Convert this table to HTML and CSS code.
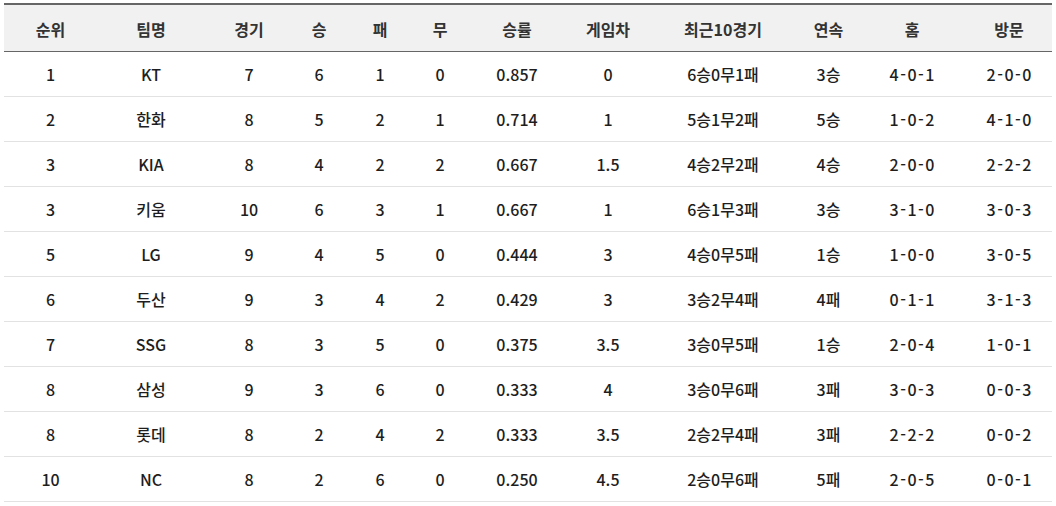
FILE: index.html
```html
<!DOCTYPE html>
<html lang="ko">
<head>
<meta charset="utf-8">
<title>순위</title>
<link rel="stylesheet" href="styles.css">
</head>
<body>
<div class="wrap">
<table class="rank">
<colgroup>
<col class="c1"><col class="c2"><col class="c3"><col class="c4"><col class="c5"><col class="c6">
<col class="c7"><col class="c8"><col class="c9"><col class="c10"><col class="c11"><col class="c12">
</colgroup>
<thead>
<tr><th>순위</th><th>팀명</th><th>경기</th><th>승</th><th>패</th><th>무</th><th>승률</th><th>게임차</th><th>최근10경기</th><th>연속</th><th>홈</th><th>방문</th></tr>
</thead>
<tbody>
<tr><td>1</td><td>KT</td><td>7</td><td>6</td><td>1</td><td>0</td><td>0.857</td><td>0</td><td>6승0무1패</td><td>3승</td><td>4-0-1</td><td>2-0-0</td></tr>
<tr><td>2</td><td>한화</td><td>8</td><td>5</td><td>2</td><td>1</td><td>0.714</td><td>1</td><td>5승1무2패</td><td>5승</td><td>1-0-2</td><td>4-1-0</td></tr>
<tr><td>3</td><td>KIA</td><td>8</td><td>4</td><td>2</td><td>2</td><td>0.667</td><td>1.5</td><td>4승2무2패</td><td>4승</td><td>2-0-0</td><td>2-2-2</td></tr>
<tr><td>3</td><td>키움</td><td>10</td><td>6</td><td>3</td><td>1</td><td>0.667</td><td>1</td><td>6승1무3패</td><td>3승</td><td>3-1-0</td><td>3-0-3</td></tr>
<tr><td>5</td><td>LG</td><td>9</td><td>4</td><td>5</td><td>0</td><td>0.444</td><td>3</td><td>4승0무5패</td><td>1승</td><td>1-0-0</td><td>3-0-5</td></tr>
<tr><td>6</td><td>두산</td><td>9</td><td>3</td><td>4</td><td>2</td><td>0.429</td><td>3</td><td>3승2무4패</td><td>4패</td><td>0-1-1</td><td>3-1-3</td></tr>
<tr><td>7</td><td>SSG</td><td>8</td><td>3</td><td>5</td><td>0</td><td>0.375</td><td>3.5</td><td>3승0무5패</td><td>1승</td><td>2-0-4</td><td>1-0-1</td></tr>
<tr><td>8</td><td>삼성</td><td>9</td><td>3</td><td>6</td><td>0</td><td>0.333</td><td>4</td><td>3승0무6패</td><td>3패</td><td>3-0-3</td><td>0-0-3</td></tr>
<tr><td>8</td><td>롯데</td><td>8</td><td>2</td><td>4</td><td>2</td><td>0.333</td><td>3.5</td><td>2승2무4패</td><td>3패</td><td>2-2-2</td><td>0-0-2</td></tr>
<tr><td>10</td><td>NC</td><td>8</td><td>2</td><td>6</td><td>0</td><td>0.250</td><td>4.5</td><td>2승0무6패</td><td>5패</td><td>2-0-5</td><td>0-0-1</td></tr>
</tbody>
</table>
</div>
</body>
</html>
```
FILE: styles.css
```css
html, body {
  margin: 0;
  padding: 0;
  background: #fff;
}
.wrap {
  padding: 3px 4px 0 4px;
}
.rank {
  width: 1048px;
  table-layout: fixed;
  border-collapse: collapse;
  font-family: "Noto Sans CJK KR", "Noto Sans", sans-serif;
  font-size: 16px;
  font-weight: 500;
  color: #1e1e1e;
}
.c1 { width: 93px; }
.c2 { width: 108px; }
.c3 { width: 88px; }
.c4 { width: 52px; }
.c5 { width: 70px; }
.c6 { width: 50px; }
.c7 { width: 104px; }
.c8 { width: 78px; }
.c9 { width: 152px; }
.c10 { width: 59px; }
.c11 { width: 108px; }
.c12 { width: 86px; }
.rank thead tr {
  border-top: 2px solid #666;
  border-bottom: 1px solid #666;
  background: #f1f1f1;
}
.rank th {
  height: 47px;
  padding: 3px 0 0 0;
  font-weight: bold;
  color: #333;
  text-align: center;
  box-sizing: border-box;
}
.rank td {
  height: 45px;
  padding: 1px 0 0 0;
  text-align: center;
  border-bottom: 1px solid #e2e2e2;
  box-sizing: border-box;
}
.rank td:nth-child(11),
.rank td:nth-child(12) {
  letter-spacing: 1.5px;
  text-indent: 1.5px;
}
```
